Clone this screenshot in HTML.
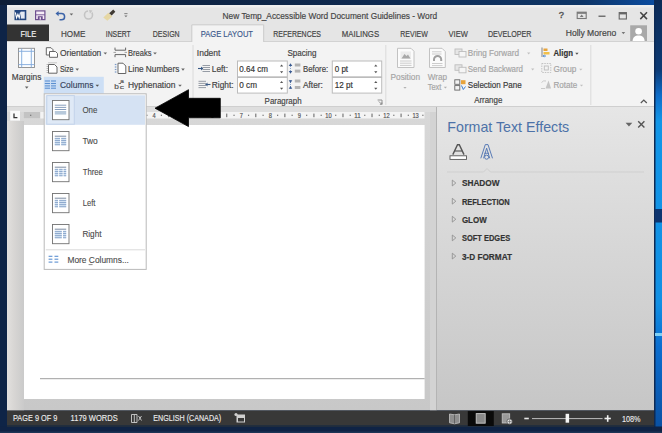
<!DOCTYPE html>
<html><head><meta charset="utf-8"><style>
html,body{margin:0;padding:0;width:662px;height:433px;overflow:hidden;background:#0e2447;}
svg{display:block;font-family:"Liberation Sans",sans-serif;}
text{font-family:"Liberation Sans",sans-serif;}
</style></head><body>
<svg width="662" height="433" viewBox="0 0 662 433" shape-rendering="geometricPrecision">
<defs><linearGradient id="topg" x1="0" x2="1" y1="0" y2="0"><stop offset="0" stop-color="#0d1d36"/><stop offset="0.6" stop-color="#0f2b52"/><stop offset="0.88" stop-color="#0e3566"/><stop offset="1" stop-color="#0b4fa6"/></linearGradient><linearGradient id="rg" x1="0" x2="0" y1="0" y2="1"><stop offset="0" stop-color="#0c2a56"/><stop offset="0.16" stop-color="#0c3a74"/><stop offset="0.22" stop-color="#0e6cc8"/><stop offset="0.28" stop-color="#1296e8"/><stop offset="0.7" stop-color="#1190e4"/><stop offset="0.8" stop-color="#0b6ed0"/><stop offset="1" stop-color="#0a4fa0"/></linearGradient><linearGradient id="pane" x1="0" x2="0" y1="0" y2="1"><stop offset="0" stop-color="#e6e6e6"/><stop offset="0.2" stop-color="#dfdfdf"/><stop offset="1" stop-color="#c6c6c6"/></linearGradient><linearGradient id="doc" x1="0" x2="0" y1="0" y2="1"><stop offset="0" stop-color="#d8d8d8"/><stop offset="1" stop-color="#c8c8c8"/></linearGradient><linearGradient id="lstrip" x1="0" x2="1" y1="0" y2="0"><stop offset="0" stop-color="#e2e0de"/><stop offset="0.4" stop-color="#d8d6d4"/><stop offset="1" stop-color="#cacaca"/></linearGradient></defs>
<rect x="0" y="0" width="662" height="433" fill="#0e2447" />
<rect x="0" y="0" width="662" height="5" fill="url(#topg)" />
<rect x="655" y="0" width="7" height="433" fill="url(#rg)" />
<rect x="654" y="0" width="1.5" height="433" fill="#0d2a55" />
<rect x="655" y="209" width="7" height="13.5" fill="#0d3570" />
<rect x="655" y="333" width="7" height="3" fill="#7fd0f5" />
<rect x="0" y="426.5" width="662" height="6.5" fill="#0f2345" />
<rect x="7" y="5" width="647" height="37" fill="#e5e5e5" />
<rect x="7" y="5" width="647" height="2.5" fill="#eeeeee" />
<rect x="14.5" y="10" width="11.8" height="10.2" fill="#23467f" />
<path d="M20.8 11.3 H25 V18.9 H20.8" fill="#e3e9f3" stroke="#2a4c86" stroke-width="0.6"/>
<path d="M15.3 12.4 L16.6 17.8 L17.9 14.4 L19.2 17.8 L20.5 12.4" stroke="#ffffff" stroke-width="1.1" fill="none"/>
<rect x="35.6" y="10.9" width="9.3" height="8.7" fill="#f6ecf6" stroke="#6d4f8f" stroke-width="1.2"/>
<line x1="35.6" y1="14.8" x2="44.9" y2="14.8" stroke="#6d4f8f" stroke-width="0.9" />
<rect x="37.8" y="16.2" width="4.9" height="3.4" fill="#6d4f8f" />
<rect x="39.6" y="17.2" width="1.3" height="2.4" fill="#f6ecf6" />
<path d="M57.5 13.6 H61.5 A3.1 3.1 0 0 1 61.5 19.8 H59.5" fill="none" stroke="#3b63a8" stroke-width="1.5"/>
<path d="M55.5 13.6 L58.6 10.9 L58.6 16.3 Z" fill="#3b63a8"/>
<path d="M69.60000000000001 13.4 L73.2 13.4 L71.4 15.56 Z" fill="#666"/>
<circle cx="88.5" cy="15" r="4" fill="none" stroke="#c4c4c4" stroke-width="1.6"/>
<rect x="88" y="9.8" width="4" height="3" fill="#e4e4e4" />
<path d="M89 10 L92.5 10.5 L90 13.5 Z" fill="#c4c4c4"/>
<path d="M103.3 17.5 L108.3 12.8 L112.3 16.6 L107.3 20.8 Z" fill="#e6d7a4"/>
<path d="M109.2 13.2 L113.2 9.6 L115.3 11.7 L111.7 15.6 Z" fill="#3f3a33"/>
<rect x="124.3" y="13.2" width="3.2" height="0.9" fill="#777" />
<path d="M124.30000000000001 15.399999999999999 L127.5 15.399999999999999 L125.9 17.32 Z" fill="#777"/>
<text x="222.6" y="19.1" font-size="9.86" font-weight="400" fill="#444" stroke="#444" stroke-width="0.18" textLength="214.5" lengthAdjust="spacingAndGlyphs" font-family="Liberation Sans">New Temp_Accessible Word Document Guidelines - Word</text>
<text x="558.8" y="18.2" font-size="9.86" font-weight="400" fill="#555" stroke="#555" stroke-width="0.4" textLength="5.2" lengthAdjust="spacingAndGlyphs" font-family="Liberation Sans">?</text>
<rect x="577.2" y="12.2" width="9" height="6.3" fill="none" stroke="#777" stroke-width="1.1"/>
<rect x="577.2" y="12.2" width="9" height="1.6" fill="#777" />
<path d="M579.8 17 L581.7 14.6 L583.6 17 Z" fill="#777"/>
<rect x="598.5" y="15.6" width="7" height="1.2" fill="#555" />
<rect x="619.2" y="12.6" width="7.2" height="6.4" fill="none" stroke="#666" stroke-width="1.1"/>
<rect x="619.2" y="12.6" width="7.2" height="1.8" fill="#666" />
<path d="M640.3 12.3 L647 19.1 M647 12.3 L640.3 19.1" stroke="#444" stroke-width="1.5"/>
<rect x="7" y="24.5" width="42" height="17.5" fill="#333333" />
<text x="20.4" y="37.2" font-size="9.28" font-weight="400" fill="#f2f2f2" stroke="#f2f2f2" stroke-width="0.18" textLength="15.9" lengthAdjust="spacingAndGlyphs" font-family="Liberation Sans">FILE</text>
<text x="61" y="37.2" font-size="9.42" font-weight="400" fill="#444" stroke="#444" stroke-width="0.18" textLength="24.3" lengthAdjust="spacingAndGlyphs" font-family="Liberation Sans">HOME</text>
<text x="105.8" y="37.2" font-size="9.42" font-weight="400" fill="#444" stroke="#444" stroke-width="0.18" textLength="24.9" lengthAdjust="spacingAndGlyphs" font-family="Liberation Sans">INSERT</text>
<text x="152.8" y="37.2" font-size="9.42" font-weight="400" fill="#444" stroke="#444" stroke-width="0.18" textLength="26.9" lengthAdjust="spacingAndGlyphs" font-family="Liberation Sans">DESIGN</text>
<text x="273.3" y="37.2" font-size="9.42" font-weight="400" fill="#444" stroke="#444" stroke-width="0.18" textLength="47.7" lengthAdjust="spacingAndGlyphs" font-family="Liberation Sans">REFERENCES</text>
<text x="341.8" y="37.2" font-size="9.42" font-weight="400" fill="#444" stroke="#444" stroke-width="0.18" textLength="37.3" lengthAdjust="spacingAndGlyphs" font-family="Liberation Sans">MAILINGS</text>
<text x="400.3" y="37.2" font-size="9.42" font-weight="400" fill="#444" stroke="#444" stroke-width="0.18" textLength="27.5" lengthAdjust="spacingAndGlyphs" font-family="Liberation Sans">REVIEW</text>
<text x="448.5" y="37.2" font-size="9.42" font-weight="400" fill="#444" stroke="#444" stroke-width="0.18" textLength="19.3" lengthAdjust="spacingAndGlyphs" font-family="Liberation Sans">VIEW</text>
<text x="487.9" y="37.2" font-size="9.42" font-weight="400" fill="#444" stroke="#444" stroke-width="0.18" textLength="43.5" lengthAdjust="spacingAndGlyphs" font-family="Liberation Sans">DEVELOPER</text>
<text x="565.7" y="36.4" font-size="9.57" font-weight="400" fill="#444" stroke="#444" stroke-width="0.18" textLength="50.5" lengthAdjust="spacingAndGlyphs" font-family="Liberation Sans">Holly Moreno</text>
<path d="M621.6 32.1 L625.1999999999999 32.1 L623.4 34.26 Z" fill="#777"/>
<rect x="630.2" y="25.3" width="16.8" height="17" fill="#a9a9a9" />
<circle cx="638.6" cy="31.2" r="3.3" fill="#fff"/>
<path d="M632.5 42.3 C632.5 37 635 35.5 638.6 35.5 C642.2 35.5 644.7 37 644.7 42.3 Z" fill="#fff"/>
<rect x="7" y="42" width="647" height="65" fill="#f3f3f3" />
<line x1="7" y1="41.5" x2="654" y2="41.5" stroke="#d2d2d2" stroke-width="1" />
<line x1="7" y1="106.5" x2="654" y2="106.5" stroke="#cfcfcf" stroke-width="1" />
<rect x="191.8" y="24.5" width="72" height="18.5" fill="#f3f3f3" />
<path d="M191.8 42 V24.8 H263.7 V42" fill="none" stroke="#cacaca" stroke-width="1"/>
<text x="200.8" y="37.2" font-size="9.42" font-weight="400" fill="#3d5a8c" stroke="#3d5a8c" stroke-width="0.18" textLength="52.2" lengthAdjust="spacingAndGlyphs" font-family="Liberation Sans">PAGE LAYOUT</text>
<line x1="193" y1="45" x2="193" y2="105" stroke="#dadada" stroke-width="1" />
<line x1="385.8" y1="45" x2="385.8" y2="105" stroke="#dadada" stroke-width="1" />
<line x1="590.8" y1="45" x2="590.8" y2="105" stroke="#dadada" stroke-width="1" />
<rect x="18.5" y="48.3" width="16" height="19.2" fill="#fbfdff" stroke="#8a8a8a" stroke-width="0.9"/>
<line x1="21.7" y1="48.5" x2="21.7" y2="67.5" stroke="#7fa9dc" stroke-width="0.9" />
<line x1="31.3" y1="48.5" x2="31.3" y2="67.5" stroke="#7fa9dc" stroke-width="0.9" />
<line x1="18.5" y1="51.3" x2="34.5" y2="51.3" stroke="#7fa9dc" stroke-width="0.9" />
<line x1="18.5" y1="64.6" x2="34.5" y2="64.6" stroke="#7fa9dc" stroke-width="0.9" />
<text x="11.8" y="79.6" font-size="8.84" font-weight="400" fill="#444" stroke="#444" stroke-width="0.18" textLength="29.5" lengthAdjust="spacingAndGlyphs" font-family="Liberation Sans">Margins</text>
<path d="M24.9 86.6 L28.5 86.6 L26.7 88.76 Z" fill="#666"/>
<path d="M46.3 47.7 H51 L53 49.7 V55 H46.3 Z" fill="#fff" stroke="#666" stroke-width="1"/>
<path d="M49.5 51.5 H55.5 L57.5 53.5 V57.3 H49.5 Z" fill="#fff" stroke="#666" stroke-width="1"/>
<text x="60" y="55.9" font-size="8.84" font-weight="400" fill="#444" stroke="#444" stroke-width="0.18" textLength="41.3" lengthAdjust="spacingAndGlyphs" font-family="Liberation Sans">Orientation</text>
<path d="M103.5 52.4 L107.1 52.4 L105.3 54.559999999999995 Z" fill="#666"/>
<path d="M48.5 64.5 H54.5 L57 67 V73.2 H48.5 Z" fill="#fff" stroke="#666" stroke-width="1"/>
<line x1="47.2" y1="64" x2="47.2" y2="73.5" stroke="#888" stroke-width="0.8" stroke-dasharray="1 1"/>
<line x1="48.5" y1="62.8" x2="57" y2="62.8" stroke="#888" stroke-width="0.8" stroke-dasharray="1 1"/>
<text x="59.9" y="72.1" font-size="8.84" font-weight="400" fill="#444" stroke="#444" stroke-width="0.18" textLength="13.6" lengthAdjust="spacingAndGlyphs" font-family="Liberation Sans">Size</text>
<path d="M75.4 68.6 L79.0 68.6 L77.2 70.76 Z" fill="#666"/>
<rect x="43.8" y="76.8" width="60" height="16.8" fill="#cddff5" />
<line x1="44.8" y1="81" x2="56" y2="81" stroke="#5b8fd0" stroke-width="1.1" />
<line x1="44.8" y1="83.5" x2="56" y2="83.5" stroke="#5b8fd0" stroke-width="1.1" />
<line x1="44.8" y1="85.9" x2="56" y2="85.9" stroke="#5b8fd0" stroke-width="1.1" />
<line x1="44.8" y1="88.2" x2="56" y2="88.2" stroke="#5b8fd0" stroke-width="1.1" />
<line x1="50.5" y1="80" x2="50.5" y2="89" stroke="#cddff5" stroke-width="1" />
<text x="60" y="88.2" font-size="8.99" font-weight="400" fill="#3a4660" stroke="#3a4660" stroke-width="0.18" textLength="33.4" lengthAdjust="spacingAndGlyphs" font-family="Liberation Sans">Columns</text>
<path d="M95.5 84.69999999999999 L99.1 84.69999999999999 L97.3 86.86 Z" fill="#555"/>
<path d="M115 47.6 V50.2 H125.6 V47.6 M115 57.2 V54.6 H125.6 V57.2" fill="none" stroke="#666" stroke-width="1"/>
<line x1="113.5" y1="52.4" x2="116" y2="52.4" stroke="#8a8a8a" stroke-width="0.8" />
<line x1="124.6" y1="52.4" x2="127" y2="52.4" stroke="#8a8a8a" stroke-width="0.8" />
<text x="128" y="55.9" font-size="8.84" font-weight="400" fill="#444" stroke="#444" stroke-width="0.18" textLength="23.4" lengthAdjust="spacingAndGlyphs" font-family="Liberation Sans">Breaks</text>
<path d="M153.2 52.4 L156.8 52.4 L155 54.559999999999995 Z" fill="#666"/>
<path d="M118 63.2 H123 L125.8 66 V73.5 H118 Z" fill="#fff" stroke="#666" stroke-width="1"/>
<rect x="114.8" y="63.9" width="1.6" height="1.2" fill="#7a9ac8" />
<rect x="114.8" y="66.4" width="1.6" height="1.2" fill="#7a9ac8" />
<rect x="114.8" y="68.9" width="1.6" height="1.2" fill="#7a9ac8" />
<rect x="114.8" y="71.4" width="1.6" height="1.2" fill="#7a9ac8" />
<text x="128" y="72.1" font-size="8.84" font-weight="400" fill="#444" stroke="#444" stroke-width="0.18" textLength="51.3" lengthAdjust="spacingAndGlyphs" font-family="Liberation Sans">Line Numbers</text>
<path d="M181.2 68.6 L184.8 68.6 L183 70.76 Z" fill="#666"/>
<text x="114.2" y="88.5" font-size="7.54" font-weight="400" fill="#555" stroke="#555" stroke-width="0.18" textLength="4.6" lengthAdjust="spacingAndGlyphs" font-family="Liberation Sans">b</text>
<text x="119.8" y="88.5" font-size="6.09" font-weight="400" fill="#555" stroke="#555" stroke-width="0.18" textLength="4.2" lengthAdjust="spacingAndGlyphs" font-family="Liberation Sans">c</text>
<text x="120.3" y="83.2" font-size="5.22" font-weight="400" fill="#555" stroke="#555" stroke-width="0.18" textLength="3.6" lengthAdjust="spacingAndGlyphs" font-family="Liberation Sans">a</text>
<line x1="118.6" y1="83.5" x2="121" y2="83.5" stroke="#555" stroke-width="0.8" />
<text x="128" y="88.2" font-size="8.84" font-weight="400" fill="#444" stroke="#444" stroke-width="0.18" textLength="47.5" lengthAdjust="spacingAndGlyphs" font-family="Liberation Sans">Hyphenation</text>
<path d="M178.2 84.69999999999999 L181.8 84.69999999999999 L180 86.86 Z" fill="#666"/>
<text x="196.8" y="55.7" font-size="8.70" font-weight="400" fill="#444" stroke="#444" stroke-width="0.18" textLength="23.6" lengthAdjust="spacingAndGlyphs" font-family="Liberation Sans">Indent</text>
<text x="287.5" y="55.8" font-size="8.70" font-weight="400" fill="#444" stroke="#444" stroke-width="0.18" textLength="29" lengthAdjust="spacingAndGlyphs" font-family="Liberation Sans">Spacing</text>
<line x1="202.5" y1="65.5" x2="210" y2="65.5" stroke="#7d8590" stroke-width="0.8" />
<line x1="202.5" y1="67.5" x2="210" y2="67.5" stroke="#7d8590" stroke-width="0.8" />
<line x1="202.5" y1="69.5" x2="210" y2="69.5" stroke="#7d8590" stroke-width="0.8" />
<line x1="202.5" y1="71.5" x2="210" y2="71.5" stroke="#7d8590" stroke-width="0.8" />
<path d="M198 68.5 H202.8" stroke="#3a5a86" stroke-width="1.1"/>
<path d="M201 66.6 L203.2 68.5 L201 70.4 Z" fill="#3a5a86"/>
<line x1="198.5" y1="81.3" x2="206" y2="81.3" stroke="#7d8590" stroke-width="0.8" />
<line x1="198.5" y1="83.4" x2="206" y2="83.4" stroke="#7d8590" stroke-width="0.8" />
<line x1="198.5" y1="85.5" x2="206" y2="85.5" stroke="#7d8590" stroke-width="0.8" />
<line x1="198.5" y1="87.6" x2="206" y2="87.6" stroke="#7d8590" stroke-width="0.8" />
<path d="M210.5 84.5 H205.7" stroke="#3a5a86" stroke-width="1.1"/>
<path d="M207.5 82.6 L205.3 84.5 L207.5 86.4 Z" fill="#3a5a86"/>
<text x="211.8" y="71.5" font-size="8.70" font-weight="400" fill="#444" stroke="#444" stroke-width="0.18" textLength="16.2" lengthAdjust="spacingAndGlyphs" font-family="Liberation Sans">Left:</text>
<text x="211.8" y="88" font-size="8.70" font-weight="400" fill="#444" stroke="#444" stroke-width="0.18" textLength="21.8" lengthAdjust="spacingAndGlyphs" font-family="Liberation Sans">Right:</text>
<rect x="237.5" y="61" width="49.8" height="15.8" fill="#fff" stroke="#bcbcbc" stroke-width="1"/>
<rect x="237.5" y="77.5" width="49.8" height="15.6" fill="#fff" stroke="#bcbcbc" stroke-width="1"/>
<rect x="332.3" y="61" width="49.4" height="15.8" fill="#fff" stroke="#bcbcbc" stroke-width="1"/>
<rect x="332.3" y="77.5" width="49.4" height="15.6" fill="#fff" stroke="#bcbcbc" stroke-width="1"/>
<path d="M280.0 66.5 L283.20000000000005 66.5 L281.6 64.6 Z" fill="#555"/>
<path d="M280.0 71.3 L283.20000000000005 71.3 L281.6 73.2 Z" fill="#555"/>
<path d="M280.0 83.0 L283.20000000000005 83.0 L281.6 81.1 Z" fill="#555"/>
<path d="M280.0 87.8 L283.20000000000005 87.8 L281.6 89.7 Z" fill="#555"/>
<path d="M374.2 66.5 L377.40000000000003 66.5 L375.8 64.6 Z" fill="#555"/>
<path d="M374.2 71.3 L377.40000000000003 71.3 L375.8 73.2 Z" fill="#555"/>
<path d="M374.2 83.0 L377.40000000000003 83.0 L375.8 81.1 Z" fill="#555"/>
<path d="M374.2 87.8 L377.40000000000003 87.8 L375.8 89.7 Z" fill="#555"/>
<text x="239.3" y="71.5" font-size="8.70" font-weight="400" fill="#333" stroke="#333" stroke-width="0.18" textLength="28.6" lengthAdjust="spacingAndGlyphs" font-family="Liberation Sans">0.64 cm</text>
<text x="239.3" y="88" font-size="8.70" font-weight="400" fill="#333" stroke="#333" stroke-width="0.18" textLength="17.7" lengthAdjust="spacingAndGlyphs" font-family="Liberation Sans">0 cm</text>
<text x="334.8" y="71.9" font-size="8.70" font-weight="400" fill="#333" stroke="#333" stroke-width="0.18" textLength="13.3" lengthAdjust="spacingAndGlyphs" font-family="Liberation Sans">0 pt</text>
<text x="334.8" y="87.8" font-size="8.70" font-weight="400" fill="#333" stroke="#333" stroke-width="0.18" textLength="18" lengthAdjust="spacingAndGlyphs" font-family="Liberation Sans">12 pt</text>
<line x1="290.5" y1="64" x2="290.5" y2="73" stroke="#6f8fc0" stroke-width="0.8" stroke-dasharray="1 1"/>
<path d="M288.7 66 L290.5 63.3 L292.3 66 Z M288.7 71 L290.5 73.7 L292.3 71 Z" fill="#3a5a90"/>
<rect x="294.8" y="63.5" width="5.6" height="3" fill="#b3b3b3" />
<rect x="294.8" y="69.6" width="5.6" height="3" fill="#b3b3b3" />
<line x1="290.5" y1="80" x2="290.5" y2="89" stroke="#6f8fc0" stroke-width="0.8" stroke-dasharray="1 1"/>
<path d="M288.7 80.2 L290.5 82.9 L292.3 80.2 Z M288.7 88.8 L290.5 86.1 L292.3 88.8 Z" fill="#3a5a90"/>
<rect x="294.8" y="79.5" width="5.6" height="3" fill="#b3b3b3" />
<rect x="294.8" y="86" width="5.6" height="3" fill="#b3b3b3" />
<text x="303" y="71.9" font-size="8.70" font-weight="400" fill="#444" stroke="#444" stroke-width="0.18" textLength="25.2" lengthAdjust="spacingAndGlyphs" font-family="Liberation Sans">Before:</text>
<text x="303" y="87.8" font-size="8.70" font-weight="400" fill="#444" stroke="#444" stroke-width="0.18" textLength="19.9" lengthAdjust="spacingAndGlyphs" font-family="Liberation Sans">After:</text>
<text x="264.6" y="104" font-size="8.70" font-weight="400" fill="#444" stroke="#444" stroke-width="0.18" textLength="37" lengthAdjust="spacingAndGlyphs" font-family="Liberation Sans">Paragraph</text>
<path d="M377.6 100 H382 V104.4" fill="none" stroke="#888" stroke-width="0.9"/>
<path d="M378.8 101.4 L381.6 104.2 M381.8 102.4 V104.3 H379.9" fill="none" stroke="#888" stroke-width="0.9"/>
<path d="M397.5 48.3 H411 L414 51.3 V67.5 H397.5 Z" fill="#fbfbfb" stroke="#c2c2c2" stroke-width="1"/>
<rect x="400.5" y="51.5" width="10.5" height="7.5" fill="#ececec" />
<path d="M401.5 58.5 L404.5 54 L406.5 56 L408 54.5 L410.5 58.5 Z" fill="#a8a8a8"/>
<line x1="400" y1="61" x2="411.5" y2="61" stroke="#c6c6c6" stroke-width="0.9" />
<line x1="400" y1="63.2" x2="411.5" y2="63.2" stroke="#c6c6c6" stroke-width="0.9" />
<line x1="400" y1="65.4" x2="411.5" y2="65.4" stroke="#c6c6c6" stroke-width="0.9" />
<text x="390.5" y="79.6" font-size="8.70" font-weight="400" fill="#a5a5a5" stroke="#a5a5a5" stroke-width="0.18" textLength="29.5" lengthAdjust="spacingAndGlyphs" font-family="Liberation Sans">Position</text>
<path d="M403.4 86.9 L406.6 86.9 L405 88.82000000000001 Z" fill="#b0b0b0"/>
<path d="M429.5 48.3 H442 L445.3 51.6 V67.5 H429.5 Z" fill="#fbfbfb" stroke="#c2c2c2" stroke-width="1"/>
<path d="M434 61 V59.5 A3.6 3.6 0 0 1 441.2 59.5 V61" fill="none" stroke="#a0a0a0" stroke-width="2"/>
<line x1="432" y1="51.8" x2="441.5" y2="51.8" stroke="#c6c6c6" stroke-width="0.9" />
<line x1="432" y1="54" x2="441.5" y2="54" stroke="#c6c6c6" stroke-width="0.9" />
<line x1="432" y1="63.5" x2="442.5" y2="63.5" stroke="#c6c6c6" stroke-width="0.9" />
<line x1="432" y1="65.6" x2="442.5" y2="65.6" stroke="#c6c6c6" stroke-width="0.9" />
<text x="427.7" y="79.6" font-size="8.70" font-weight="400" fill="#a5a5a5" stroke="#a5a5a5" stroke-width="0.18" textLength="19.3" lengthAdjust="spacingAndGlyphs" font-family="Liberation Sans">Wrap</text>
<text x="427.7" y="90" font-size="8.70" font-weight="400" fill="#a5a5a5" stroke="#a5a5a5" stroke-width="0.18" textLength="13.7" lengthAdjust="spacingAndGlyphs" font-family="Liberation Sans">Text</text>
<path d="M443.79999999999995 86.7 L447.0 86.7 L445.4 88.62 Z" fill="#b0b0b0"/>
<rect x="455" y="49" width="7" height="5.5" fill="#e6e6e6" stroke="#bdbdbd" stroke-width="0.9"/>
<rect x="459" y="51.5" width="7" height="5.5" fill="#f5f5f5" stroke="#bdbdbd" stroke-width="0.9"/>
<rect x="455" y="64.8" width="7" height="5.5" fill="#e6e6e6" stroke="#bdbdbd" stroke-width="0.9"/>
<rect x="459" y="67.3" width="7" height="5.5" fill="#f5f5f5" stroke="#bdbdbd" stroke-width="0.9"/>
<text x="467.8" y="55.7" font-size="8.70" font-weight="400" fill="#a5a5a5" stroke="#a5a5a5" stroke-width="0.18" textLength="51.2" lengthAdjust="spacingAndGlyphs" font-family="Liberation Sans">Bring Forward</text>
<path d="M527.1 52.5 L530.3000000000001 52.5 L528.7 54.419999999999995 Z" fill="#c0c0c0"/>
<text x="467.8" y="71.5" font-size="8.70" font-weight="400" fill="#a5a5a5" stroke="#a5a5a5" stroke-width="0.18" textLength="55.2" lengthAdjust="spacingAndGlyphs" font-family="Liberation Sans">Send Backward</text>
<path d="M531.1 68.5 L534.3000000000001 68.5 L532.7 70.42 Z" fill="#c0c0c0"/>
<rect x="454.8" y="79.8" width="5" height="4.5" fill="none" stroke="#666" stroke-width="0.9"/>
<rect x="454.8" y="85.6" width="5" height="4.5" fill="none" stroke="#666" stroke-width="0.9"/>
<rect x="461" y="80.2" width="4.5" height="4" fill="#e8a33a" />
<path d="M461.5 85.5 L463.3 89.5 L465.5 86.5" fill="none" stroke="#3d7fd0" stroke-width="1"/>
<text x="467.8" y="88" font-size="8.70" font-weight="400" fill="#3a3a3a" stroke="#3a3a3a" stroke-width="0.18" textLength="53.9" lengthAdjust="spacingAndGlyphs" font-family="Liberation Sans">Selection Pane</text>
<text x="474.2" y="103.3" font-size="8.70" font-weight="400" fill="#444" stroke="#444" stroke-width="0.18" textLength="28.1" lengthAdjust="spacingAndGlyphs" font-family="Liberation Sans">Arrange</text>
<path d="M542 47.5 V57" stroke="#777" stroke-width="0.9"/>
<rect x="543.5" y="48.5" width="4" height="2.5" fill="#e8a33a" />
<rect x="543.5" y="52" width="6" height="2.5" fill="#f1c04a" />
<path d="M543.5 56 L546 56 M544.3 54.8 L543.3 56 L544.3 57.2" stroke="#3d7fd0" stroke-width="0.9" fill="none"/>
<text x="553.5" y="56" font-size="8.84" font-weight="700" fill="#333" stroke="#333" stroke-width="0.18" textLength="19.4" lengthAdjust="spacingAndGlyphs" font-family="Liberation Sans">Align</text>
<path d="M575.1999999999999 52.65 L578.6 52.65 L576.9 54.69 Z" fill="#555"/>
<rect x="541.8" y="63.5" width="9" height="9" fill="none" stroke="#bdbdbd" stroke-width="0.9" stroke-dasharray="1.5 1"/>
<rect x="544.3" y="66" width="4" height="4" fill="none" stroke="#bdbdbd" stroke-width="0.9"/>
<text x="553.5" y="71.9" font-size="8.70" font-weight="400" fill="#a5a5a5" stroke="#a5a5a5" stroke-width="0.18" textLength="22.8" lengthAdjust="spacingAndGlyphs" font-family="Liberation Sans">Group</text>
<path d="M579.1999999999999 68.7 L582.4 68.7 L580.8 70.62 Z" fill="#c0c0c0"/>
<path d="M545.5 88.5 L548.5 80.5 L551 88.5 Z" fill="#c4c4c4"/>
<path d="M541.5 82.5 Q543.5 80 546 81" fill="none" stroke="#c4c4c4" stroke-width="0.9"/>
<line x1="541" y1="88.5" x2="545" y2="88.5" stroke="#c4c4c4" stroke-width="0.9" />
<text x="553.5" y="87.9" font-size="8.70" font-weight="400" fill="#a5a5a5" stroke="#a5a5a5" stroke-width="0.18" textLength="23.8" lengthAdjust="spacingAndGlyphs" font-family="Liberation Sans">Rotate</text>
<path d="M579.9 84.7 L583.1 84.7 L581.5 86.62 Z" fill="#c0c0c0"/>
<path d="M640.8 103 L643.8 100 L646.8 103" fill="none" stroke="#555" stroke-width="1.2"/>
<rect x="7" y="107" width="430" height="303.5" fill="url(#doc)" />
<rect x="7" y="107" width="430" height="5" fill="#dedede" />
<rect x="7" y="121" width="17" height="289.5" fill="url(#lstrip)" />
<rect x="10.2" y="110.8" width="9.8" height="9.8" fill="#fafafa" />
<path d="M14 113.5 V117.6 H17.4" fill="none" stroke="#333" stroke-width="1.3"/>
<rect x="23.5" y="112" width="401" height="6.5" fill="#f4f4f4" />
<rect x="23.5" y="112" width="16.7" height="6.5" fill="#c3c3c3" />
<rect x="30.087500000000016" y="114.7" width="1.2" height="1.2" fill="#707070" />
<rect x="44.61250000000002" y="114.7" width="1.2" height="1.2" fill="#707070" />
<line x1="52.475000000000016" y1="113.6" x2="52.475000000000016" y2="117.2" stroke="#606060" stroke-width="1" />
<rect x="59.13750000000002" y="114.7" width="1.2" height="1.2" fill="#707070" />
<rect x="73.66250000000002" y="114.7" width="1.2" height="1.2" fill="#707070" />
<line x1="81.52500000000002" y1="113.6" x2="81.52500000000002" y2="117.2" stroke="#606060" stroke-width="1" />
<rect x="88.18750000000003" y="114.7" width="1.2" height="1.2" fill="#707070" />
<rect x="102.71250000000002" y="114.7" width="1.2" height="1.2" fill="#707070" />
<line x1="110.57500000000002" y1="113.6" x2="110.57500000000002" y2="117.2" stroke="#606060" stroke-width="1" />
<rect x="117.23750000000001" y="114.7" width="1.2" height="1.2" fill="#707070" />
<rect x="131.76250000000002" y="114.7" width="1.2" height="1.2" fill="#707070" />
<line x1="139.62500000000003" y1="113.6" x2="139.62500000000003" y2="117.2" stroke="#606060" stroke-width="1" />
<rect x="146.28750000000002" y="114.7" width="1.2" height="1.2" fill="#707070" />
<rect x="160.81250000000003" y="114.7" width="1.2" height="1.2" fill="#707070" />
<line x1="168.67500000000004" y1="113.6" x2="168.67500000000004" y2="117.2" stroke="#606060" stroke-width="1" />
<rect x="175.33750000000003" y="114.7" width="1.2" height="1.2" fill="#707070" />
<rect x="189.8625" y="114.7" width="1.2" height="1.2" fill="#707070" />
<line x1="197.72500000000002" y1="113.6" x2="197.72500000000002" y2="117.2" stroke="#606060" stroke-width="1" />
<rect x="204.38750000000002" y="114.7" width="1.2" height="1.2" fill="#707070" />
<rect x="218.91250000000002" y="114.7" width="1.2" height="1.2" fill="#707070" />
<line x1="226.77500000000003" y1="113.6" x2="226.77500000000003" y2="117.2" stroke="#606060" stroke-width="1" />
<rect x="233.43750000000003" y="114.7" width="1.2" height="1.2" fill="#707070" />
<rect x="247.9625" y="114.7" width="1.2" height="1.2" fill="#707070" />
<line x1="255.82500000000002" y1="113.6" x2="255.82500000000002" y2="117.2" stroke="#606060" stroke-width="1" />
<rect x="262.4875" y="114.7" width="1.2" height="1.2" fill="#707070" />
<rect x="277.0125" y="114.7" width="1.2" height="1.2" fill="#707070" />
<line x1="284.875" y1="113.6" x2="284.875" y2="117.2" stroke="#606060" stroke-width="1" />
<rect x="291.5375" y="114.7" width="1.2" height="1.2" fill="#707070" />
<rect x="306.06249999999994" y="114.7" width="1.2" height="1.2" fill="#707070" />
<line x1="313.92499999999995" y1="113.6" x2="313.92499999999995" y2="117.2" stroke="#606060" stroke-width="1" />
<rect x="320.5875" y="114.7" width="1.2" height="1.2" fill="#707070" />
<rect x="335.1125" y="114.7" width="1.2" height="1.2" fill="#707070" />
<line x1="342.975" y1="113.6" x2="342.975" y2="117.2" stroke="#606060" stroke-width="1" />
<rect x="349.63750000000005" y="114.7" width="1.2" height="1.2" fill="#707070" />
<rect x="364.16249999999997" y="114.7" width="1.2" height="1.2" fill="#707070" />
<line x1="372.025" y1="113.6" x2="372.025" y2="117.2" stroke="#606060" stroke-width="1" />
<rect x="378.6875" y="114.7" width="1.2" height="1.2" fill="#707070" />
<rect x="393.21250000000003" y="114.7" width="1.2" height="1.2" fill="#707070" />
<line x1="401.07500000000005" y1="113.6" x2="401.07500000000005" y2="117.2" stroke="#606060" stroke-width="1" />
<rect x="407.73750000000007" y="114.7" width="1.2" height="1.2" fill="#707070" />
<rect x="422.2625" y="114.7" width="1.2" height="1.2" fill="#707070" />
<text x="65.40000000000002" y="117.6" font-size="6.96" font-weight="400" fill="#555" stroke="#555" stroke-width="0.18" textLength="3.2" lengthAdjust="spacingAndGlyphs" font-family="Liberation Sans">1</text>
<text x="94.45000000000002" y="117.6" font-size="6.96" font-weight="400" fill="#555" stroke="#555" stroke-width="0.18" textLength="3.2" lengthAdjust="spacingAndGlyphs" font-family="Liberation Sans">2</text>
<text x="123.50000000000003" y="117.6" font-size="6.96" font-weight="400" fill="#555" stroke="#555" stroke-width="0.18" textLength="3.2" lengthAdjust="spacingAndGlyphs" font-family="Liberation Sans">3</text>
<text x="152.55000000000004" y="117.6" font-size="6.96" font-weight="400" fill="#555" stroke="#555" stroke-width="0.18" textLength="3.2" lengthAdjust="spacingAndGlyphs" font-family="Liberation Sans">4</text>
<text x="181.60000000000002" y="117.6" font-size="6.96" font-weight="400" fill="#555" stroke="#555" stroke-width="0.18" textLength="3.2" lengthAdjust="spacingAndGlyphs" font-family="Liberation Sans">5</text>
<text x="210.65000000000003" y="117.6" font-size="6.96" font-weight="400" fill="#555" stroke="#555" stroke-width="0.18" textLength="3.2" lengthAdjust="spacingAndGlyphs" font-family="Liberation Sans">6</text>
<text x="239.70000000000002" y="117.6" font-size="6.96" font-weight="400" fill="#555" stroke="#555" stroke-width="0.18" textLength="3.2" lengthAdjust="spacingAndGlyphs" font-family="Liberation Sans">7</text>
<text x="268.75" y="117.6" font-size="6.96" font-weight="400" fill="#555" stroke="#555" stroke-width="0.18" textLength="3.2" lengthAdjust="spacingAndGlyphs" font-family="Liberation Sans">8</text>
<text x="297.79999999999995" y="117.6" font-size="6.96" font-weight="400" fill="#555" stroke="#555" stroke-width="0.18" textLength="3.2" lengthAdjust="spacingAndGlyphs" font-family="Liberation Sans">9</text>
<text x="325.25000000000006" y="117.6" font-size="6.96" font-weight="400" fill="#555" stroke="#555" stroke-width="0.18" textLength="6.4" lengthAdjust="spacingAndGlyphs" font-family="Liberation Sans">10</text>
<text x="354.3" y="117.6" font-size="6.96" font-weight="400" fill="#555" stroke="#555" stroke-width="0.18" textLength="6.4" lengthAdjust="spacingAndGlyphs" font-family="Liberation Sans">11</text>
<text x="383.3500000000001" y="117.6" font-size="6.96" font-weight="400" fill="#555" stroke="#555" stroke-width="0.18" textLength="6.4" lengthAdjust="spacingAndGlyphs" font-family="Liberation Sans">12</text>
<text x="412.40000000000003" y="117.6" font-size="6.96" font-weight="400" fill="#555" stroke="#555" stroke-width="0.18" textLength="6.4" lengthAdjust="spacingAndGlyphs" font-family="Liberation Sans">13</text>
<rect x="24" y="125" width="400.6" height="274" fill="#ffffff" />
<line x1="40" y1="378.7" x2="424.6" y2="378.7" stroke="#9e9e9e" stroke-width="1" />
<rect x="430" y="112" width="6" height="298.5" fill="#d3d3d3" />
<line x1="436.5" y1="107" x2="436.5" y2="410.5" stroke="#b4b4b4" stroke-width="1" />
<rect x="437" y="107" width="217" height="303.5" fill="url(#pane)" />
<text x="447.3" y="131.8" font-size="14.20" font-weight="400" fill="#4d72a8" textLength="121.9" lengthAdjust="spacingAndGlyphs" font-family="Liberation Sans">Format Text Effects</text>
<path d="M625.6 122.8 H632.3 L628.95 126.5 Z" fill="#666"/>
<path d="M638.2 121.2 L644.4 127.4 M644.4 121.2 L638.2 127.4" stroke="#555" stroke-width="1.4"/>
<path d="M452.8 154.6 L457.5 144.8 L459.3 144.8 L464 154.6" fill="none" stroke="#555" stroke-width="1.4"/>
<path d="M454.8 151 H462" stroke="#555" stroke-width="1.1"/>
<rect x="450" y="155.8" width="16.5" height="3.6" fill="#fff" stroke="#555" stroke-width="0.9"/>
<path d="M480.8 158.3 L485.3 144.6 L488 144.6 L492.5 158.3 M483.6 158.3 L486.65 148.2 L489.7 158.3" fill="none" stroke="#4a6fb0" stroke-width="0.9"/>
<path d="M484.3 153.3 H489" stroke="#4a6fb0" stroke-width="0.8"/>
<circle cx="486.6" cy="157.2" r="2" fill="#e4e4e4" stroke="#4a6fb0" stroke-width="0.9"/>
<path d="M447 172 H483.5 L487 168.5 L490.5 172 H644" fill="none" stroke="#cfcfcf" stroke-width="1"/>
<path d="M452.3 180.1 L455.8 183.0 L452.3 185.9 Z" fill="none" stroke="#8a8a8a" stroke-width="0.8"/>
<text x="461.9" y="186.4" font-size="9.42" font-weight="700" fill="#333" stroke="#333" stroke-width="0.18" textLength="37.7" lengthAdjust="spacingAndGlyphs" font-family="Liberation Sans">SHADOW</text>
<path d="M452.3 198.29999999999998 L455.8 201.2 L452.3 204.1 Z" fill="none" stroke="#8a8a8a" stroke-width="0.8"/>
<text x="461.9" y="204.6" font-size="9.42" font-weight="700" fill="#333" stroke="#333" stroke-width="0.18" textLength="47.8" lengthAdjust="spacingAndGlyphs" font-family="Liberation Sans">REFLECTION</text>
<path d="M452.3 216.29999999999998 L455.8 219.2 L452.3 222.1 Z" fill="none" stroke="#8a8a8a" stroke-width="0.8"/>
<text x="461.9" y="222.6" font-size="9.42" font-weight="700" fill="#333" stroke="#333" stroke-width="0.18" textLength="24.8" lengthAdjust="spacingAndGlyphs" font-family="Liberation Sans">GLOW</text>
<path d="M452.3 235.0 L455.8 237.9 L452.3 240.8 Z" fill="none" stroke="#8a8a8a" stroke-width="0.8"/>
<text x="461.9" y="241.3" font-size="9.42" font-weight="700" fill="#333" stroke="#333" stroke-width="0.18" textLength="48.3" lengthAdjust="spacingAndGlyphs" font-family="Liberation Sans">SOFT EDGES</text>
<path d="M452.3 253.2 L455.8 256.1 L452.3 259.0 Z" fill="none" stroke="#8a8a8a" stroke-width="0.8"/>
<text x="461.9" y="259.5" font-size="9.42" font-weight="700" fill="#333" stroke="#333" stroke-width="0.18" textLength="50.1" lengthAdjust="spacingAndGlyphs" font-family="Liberation Sans">3-D FORMAT</text>
<rect x="44.2" y="93.8" width="102" height="175.6" fill="#ffffff" stroke="#bababa" stroke-width="1"/>
<rect x="45.5" y="95.3" width="99.5" height="29.5" fill="#d5e2f3" />
<rect x="46.8" y="95.6" width="27.5" height="28.6" fill="#dfe9f6" stroke="#c3d3ea" stroke-width="1"/>
<rect x="52.5" y="100.5" width="16.5" height="19.2" fill="#fff" stroke="#727272" stroke-width="0.9"/>
<line x1="54.8" y1="105.2" x2="66.2" y2="105.2" stroke="#7b93b5" stroke-width="0.9" />
<line x1="54.8" y1="107.4" x2="66.2" y2="107.4" stroke="#7b93b5" stroke-width="0.9" />
<line x1="54.8" y1="109.5" x2="66.2" y2="109.5" stroke="#7b93b5" stroke-width="0.9" />
<rect x="54.8" y="111" width="11.4" height="3.6" fill="#b7c9db" />
<rect x="52.5" y="131.5" width="16.5" height="19.2" fill="#fff" stroke="#727272" stroke-width="0.9"/>
<line x1="54.8" y1="136.2" x2="66.2" y2="136.2" stroke="#6d7f99" stroke-width="0.9" />
<rect x="54.8" y="137.8" width="5.2" height="7.6" fill="#d3e2f2" />
<line x1="54.8" y1="138.4" x2="60.0" y2="138.4" stroke="#7d9cc4" stroke-width="0.8" />
<line x1="54.8" y1="140.5" x2="60.0" y2="140.5" stroke="#7d9cc4" stroke-width="0.8" />
<line x1="54.8" y1="142.6" x2="60.0" y2="142.6" stroke="#7d9cc4" stroke-width="0.8" />
<line x1="54.8" y1="144.70000000000002" x2="60.0" y2="144.70000000000002" stroke="#7d9cc4" stroke-width="0.8" />
<rect x="61.2" y="137.8" width="5.0" height="7.6" fill="#d3e2f2" />
<line x1="61.2" y1="138.4" x2="66.2" y2="138.4" stroke="#7d9cc4" stroke-width="0.8" />
<line x1="61.2" y1="140.5" x2="66.2" y2="140.5" stroke="#7d9cc4" stroke-width="0.8" />
<line x1="61.2" y1="142.6" x2="66.2" y2="142.6" stroke="#7d9cc4" stroke-width="0.8" />
<line x1="61.2" y1="144.70000000000002" x2="66.2" y2="144.70000000000002" stroke="#7d9cc4" stroke-width="0.8" />
<rect x="52.5" y="162.5" width="16.5" height="19.2" fill="#fff" stroke="#727272" stroke-width="0.9"/>
<line x1="54.8" y1="167.2" x2="66.2" y2="167.2" stroke="#6d7f99" stroke-width="0.9" />
<rect x="54.8" y="168.8" width="3.4000000000000004" height="7.6" fill="#d3e2f2" />
<line x1="54.8" y1="169.4" x2="58.2" y2="169.4" stroke="#7d9cc4" stroke-width="0.8" />
<line x1="54.8" y1="171.5" x2="58.2" y2="171.5" stroke="#7d9cc4" stroke-width="0.8" />
<line x1="54.8" y1="173.6" x2="58.2" y2="173.6" stroke="#7d9cc4" stroke-width="0.8" />
<line x1="54.8" y1="175.70000000000002" x2="58.2" y2="175.70000000000002" stroke="#7d9cc4" stroke-width="0.8" />
<rect x="59.2" y="168.8" width="3.3999999999999995" height="7.6" fill="#d3e2f2" />
<line x1="59.2" y1="169.4" x2="62.6" y2="169.4" stroke="#7d9cc4" stroke-width="0.8" />
<line x1="59.2" y1="171.5" x2="62.6" y2="171.5" stroke="#7d9cc4" stroke-width="0.8" />
<line x1="59.2" y1="173.6" x2="62.6" y2="173.6" stroke="#7d9cc4" stroke-width="0.8" />
<line x1="59.2" y1="175.70000000000002" x2="62.6" y2="175.70000000000002" stroke="#7d9cc4" stroke-width="0.8" />
<rect x="63.6" y="168.8" width="2.5999999999999996" height="7.6" fill="#d3e2f2" />
<line x1="63.6" y1="169.4" x2="66.2" y2="169.4" stroke="#7d9cc4" stroke-width="0.8" />
<line x1="63.6" y1="171.5" x2="66.2" y2="171.5" stroke="#7d9cc4" stroke-width="0.8" />
<line x1="63.6" y1="173.6" x2="66.2" y2="173.6" stroke="#7d9cc4" stroke-width="0.8" />
<line x1="63.6" y1="175.70000000000002" x2="66.2" y2="175.70000000000002" stroke="#7d9cc4" stroke-width="0.8" />
<rect x="52.5" y="193.5" width="16.5" height="19.2" fill="#fff" stroke="#727272" stroke-width="0.9"/>
<line x1="54.8" y1="198.2" x2="66.2" y2="198.2" stroke="#6d7f99" stroke-width="0.9" />
<rect x="54.8" y="199.8" width="3.2" height="7.6" fill="#d3e2f2" />
<line x1="54.8" y1="200.4" x2="58.0" y2="200.4" stroke="#7d9cc4" stroke-width="0.8" />
<line x1="54.8" y1="202.5" x2="58.0" y2="202.5" stroke="#7d9cc4" stroke-width="0.8" />
<line x1="54.8" y1="204.6" x2="58.0" y2="204.6" stroke="#7d9cc4" stroke-width="0.8" />
<line x1="54.8" y1="206.70000000000002" x2="58.0" y2="206.70000000000002" stroke="#7d9cc4" stroke-width="0.8" />
<rect x="59.2" y="199.8" width="6.999999999999999" height="7.6" fill="#d3e2f2" />
<line x1="59.2" y1="200.4" x2="66.2" y2="200.4" stroke="#7d9cc4" stroke-width="0.8" />
<line x1="59.2" y1="202.5" x2="66.2" y2="202.5" stroke="#7d9cc4" stroke-width="0.8" />
<line x1="59.2" y1="204.6" x2="66.2" y2="204.6" stroke="#7d9cc4" stroke-width="0.8" />
<line x1="59.2" y1="206.70000000000002" x2="66.2" y2="206.70000000000002" stroke="#7d9cc4" stroke-width="0.8" />
<rect x="52.5" y="224.5" width="16.5" height="19.2" fill="#fff" stroke="#727272" stroke-width="0.9"/>
<line x1="54.8" y1="229.2" x2="66.2" y2="229.2" stroke="#6d7f99" stroke-width="0.9" />
<rect x="54.8" y="230.8" width="7.000000000000001" height="7.6" fill="#d3e2f2" />
<line x1="54.8" y1="231.4" x2="61.8" y2="231.4" stroke="#7d9cc4" stroke-width="0.8" />
<line x1="54.8" y1="233.5" x2="61.8" y2="233.5" stroke="#7d9cc4" stroke-width="0.8" />
<line x1="54.8" y1="235.6" x2="61.8" y2="235.6" stroke="#7d9cc4" stroke-width="0.8" />
<line x1="54.8" y1="237.70000000000002" x2="61.8" y2="237.70000000000002" stroke="#7d9cc4" stroke-width="0.8" />
<rect x="63.0" y="230.8" width="3.1999999999999993" height="7.6" fill="#d3e2f2" />
<line x1="63.0" y1="231.4" x2="66.2" y2="231.4" stroke="#7d9cc4" stroke-width="0.8" />
<line x1="63.0" y1="233.5" x2="66.2" y2="233.5" stroke="#7d9cc4" stroke-width="0.8" />
<line x1="63.0" y1="235.6" x2="66.2" y2="235.6" stroke="#7d9cc4" stroke-width="0.8" />
<line x1="63.0" y1="237.70000000000002" x2="66.2" y2="237.70000000000002" stroke="#7d9cc4" stroke-width="0.8" />
<text x="82.4" y="112.9" font-size="9.57" font-weight="400" fill="#4a4a4a" stroke="#4a4a4a" stroke-width="0.12" textLength="14.9" lengthAdjust="spacingAndGlyphs" font-family="Liberation Sans">One</text>
<text x="82.4" y="143.7" font-size="9.57" font-weight="400" fill="#4a4a4a" stroke="#4a4a4a" stroke-width="0.12" textLength="15.4" lengthAdjust="spacingAndGlyphs" font-family="Liberation Sans">Two</text>
<text x="82.7" y="174.5" font-size="9.57" font-weight="400" fill="#4a4a4a" stroke="#4a4a4a" stroke-width="0.12" textLength="20.2" lengthAdjust="spacingAndGlyphs" font-family="Liberation Sans">Three</text>
<text x="82.7" y="205.7" font-size="9.57" font-weight="400" fill="#4a4a4a" stroke="#4a4a4a" stroke-width="0.12" textLength="12.7" lengthAdjust="spacingAndGlyphs" font-family="Liberation Sans">Left</text>
<text x="82.4" y="236.6" font-size="9.57" font-weight="400" fill="#4a4a4a" stroke="#4a4a4a" stroke-width="0.12" textLength="19.1" lengthAdjust="spacingAndGlyphs" font-family="Liberation Sans">Right</text>
<line x1="45.8" y1="249.8" x2="145" y2="249.8" stroke="#dadada" stroke-width="1" />
<line x1="48.6" y1="256.3" x2="52.4" y2="256.3" stroke="#5b8fd0" stroke-width="1.1" />
<line x1="54.5" y1="256.3" x2="58.3" y2="256.3" stroke="#5b8fd0" stroke-width="1.1" />
<line x1="48.6" y1="259.2" x2="52.4" y2="259.2" stroke="#5b8fd0" stroke-width="1.1" />
<line x1="54.5" y1="259.2" x2="58.3" y2="259.2" stroke="#5b8fd0" stroke-width="1.1" />
<line x1="48.6" y1="262.1" x2="52.4" y2="262.1" stroke="#5b8fd0" stroke-width="1.1" />
<line x1="54.5" y1="262.1" x2="58.3" y2="262.1" stroke="#5b8fd0" stroke-width="1.1" />
<text x="67.4" y="262.9" font-size="9.42" font-weight="400" fill="#4a4a4a" stroke="#4a4a4a" stroke-width="0.12" textLength="61.5" lengthAdjust="spacingAndGlyphs" font-family="Liberation Sans">More Columns...</text>
<line x1="88.6" y1="264.6" x2="92.6" y2="264.6" stroke="#555" stroke-width="0.7" />
<path d="M155 108.2 L188.5 89.7 L188.5 98.3 L220.3 98.3 L220.3 117.8 L188.5 117.8 L188.5 126.6 Z" fill="#000" stroke="#000" stroke-width="0.8" stroke-linejoin="round"/>
<rect x="7" y="410.5" width="647" height="14.8" fill="#383838" />
<rect x="7" y="425.3" width="647" height="1.4" fill="#27313d" />
<rect x="0" y="431.5" width="662" height="1.5" fill="#1c3556" />
<text x="13" y="421.1" font-size="8.41" font-weight="400" fill="#eeeeee" stroke="#eeeeee" stroke-width="0.12" textLength="44.3" lengthAdjust="spacingAndGlyphs" font-family="Liberation Sans">PAGE 9 OF 9</text>
<text x="70.6" y="421.1" font-size="8.41" font-weight="400" fill="#eeeeee" stroke="#eeeeee" stroke-width="0.12" textLength="47.1" lengthAdjust="spacingAndGlyphs" font-family="Liberation Sans">1179 WORDS</text>
<path d="M131.5 414.5 H137 V422.5 H131.5 Z M134.3 414.5 V422.5" fill="none" stroke="#cfcfcf" stroke-width="0.9"/>
<path d="M138.5 416 L141.5 420.5 M141.5 416 L138.5 420.5" stroke="#cfcfcf" stroke-width="0.9"/>
<text x="153.3" y="421.1" font-size="8.41" font-weight="400" fill="#eeeeee" stroke="#eeeeee" stroke-width="0.12" textLength="67.9" lengthAdjust="spacingAndGlyphs" font-family="Liberation Sans">ENGLISH (CANADA)</text>
<rect x="236.5" y="414.5" width="8.5" height="8" fill="#cfcfcf"/>
<rect x="238" y="418" width="6" height="3.5" fill="#393939" />
<circle cx="236" cy="414.5" r="1.6" fill="#cfcfcf"/>
<path d="M449.5 414 L454.5 414.8 L459.5 414 V422.8 L454.5 423.8 L449.5 422.8 Z" fill="#8e8e8e" stroke="#c4c4c4" stroke-width="0.8"/>
<line x1="454.5" y1="415" x2="454.5" y2="423.6" stroke="#555" stroke-width="0.8" />
<rect x="467.8" y="411.1" width="26" height="14.9" fill="#0a0a0a" />
<rect x="476.2" y="413.6" width="9" height="9.6" fill="#8a8a8a" stroke="#c8c8c8" stroke-width="0.9"/>
<rect x="502.2" y="413.8" width="7.5" height="9.2" fill="#9a9a9a" stroke="#c8c8c8" stroke-width="0.8"/>
<circle cx="509.6" cy="421.6" r="2.7" fill="#e8e8e8" stroke="#393939" stroke-width="0.6"/>
<path d="M507.5 421.6 H511.7 M509.6 419.3 V423.9" stroke="#555" stroke-width="0.6"/>
<rect x="524.3" y="417.7" width="4.5" height="1.6" fill="#e8e8e8" />
<line x1="532" y1="418.6" x2="602.6" y2="418.6" stroke="#bdbdbd" stroke-width="1" />
<rect x="565.6" y="413.8" width="3.5" height="8.9" fill="#f4f4f4" />
<rect x="604.5" y="417.7" width="6.3" height="1.6" fill="#f0f0f0" />
<rect x="606.9" y="415.2" width="1.6" height="6.6" fill="#f0f0f0" />
<text x="622" y="421.6" font-size="8.55" font-weight="400" fill="#eeeeee" stroke="#eeeeee" stroke-width="0.12" textLength="18.5" lengthAdjust="spacingAndGlyphs" font-family="Liberation Sans">108%</text>
</svg>
</body></html>
